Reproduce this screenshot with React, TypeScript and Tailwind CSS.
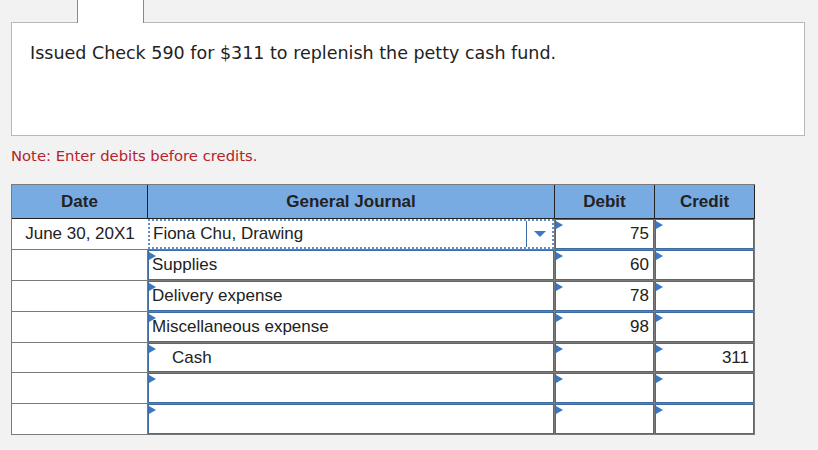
import React from 'react';

type Row = { date?: string; account: string; indent?: boolean; debit?: string; credit?: string; h: string };

const rows: Row[] = [
  { date: 'June 30, 20X1', account: 'Fiona Chu, Drawing', debit: '75', h: 'h-[31px]' },
  { account: 'Supplies', debit: '60', h: 'h-[31px]' },
  { account: 'Delivery expense', debit: '78', h: 'h-[31px]' },
  { account: 'Miscellaneous expense', debit: '98', h: 'h-[31px]' },
  { account: 'Cash', indent: true, credit: '311', h: 'h-[30px]' },
  { account: '', h: 'h-[31px]' },
  { account: '', h: 'h-[31px]' },
];

function Marker() {
  return (
    <span className="absolute left-0 top-px w-0 h-0 border-t-[4px] border-b-[4px] border-l-[7px] border-t-transparent border-b-transparent border-l-[#3a78c3]" />
  );
}

function AmountCell({ value }: { value?: string }) {
  return (
    <div className="border-r border-b border-[#7a7a7a]">
      <div className="relative h-full border border-[#3f6ba3] bg-white flex items-center justify-end pr-[4px]">
        <Marker />
        {value}
      </div>
    </div>
  );
}

export default function App() {
  return (
    <div className="w-[818px] h-[450px] bg-[#f2f2f2] overflow-hidden text-[#222]" style={{ fontFamily: '"DejaVu Sans", Verdana, sans-serif' }}>
      <div className="relative z-10 ml-[77px] w-[67px] h-[23px] -mb-px bg-white border-x border-[#8a8a8a]" />
      <div className="ml-[11px] w-[794px] h-[114px] bg-white border border-[#b8b8b8] pl-[18px] pt-[17px] text-[17.5px]">
        Issued Check 590 for $311 to replenish the petty cash fund.
      </div>
      <div className="ml-[11px] mt-[9px] text-[14.8px] text-[#b4232b] leading-[22px]">
        Note: Enter debits before credits.
      </div>

      <div
        className="mt-[17px] ml-[11px] w-[744px] border-l border-t border-[#7a7a7a] text-[17px]"
        style={{ fontFamily: '"Liberation Sans", Arial, sans-serif' }}
      >
        <div className="grid grid-cols-[136px_407px_100px_100px] h-[34px] bg-[#78abe2] font-bold">
          <div className="flex items-center justify-center border-r border-b border-[#222]">Date</div>
          <div className="flex items-center justify-center border-r border-b border-[#222]">General Journal</div>
          <div className="flex items-center justify-center border-r border-b border-[#222]">Debit</div>
          <div className="flex items-center justify-center border-r border-b border-[#222]">Credit</div>
        </div>

        {rows.map((r, i) => (
          <div key={i} className={`grid grid-cols-[136px_407px_100px_100px] ${r.h}`}>
            <div className={`flex items-center justify-center bg-white border-b border-[#7a7a7a] ${i === 0 ? '' : 'border-r'}`}>
              {r.date}
            </div>
            {i === 0 ? (
              <div className="border-r border-b border-[#7a7a7a] bg-white">
                <div className="h-full flex items-center border-2 border-dotted border-[#5b8fd1] pl-[3px]">
                  <span className="flex-1">{r.account}</span>
                  <span className="w-px h-[26px] bg-[#3d6fae]" />
                  <span className="w-[25px] flex justify-center">
                    <span className="w-0 h-0 border-l-[6px] border-r-[6px] border-t-[6px] border-l-transparent border-r-transparent border-t-[#3a78c3]" />
                  </span>
                </div>
              </div>
            ) : (
              <div className="border-r border-b border-[#7a7a7a]">
                <div className={`relative h-full border border-[#3f6ba3] bg-white flex items-center ${r.indent ? 'pl-[23px]' : 'pl-[3px]'}`}>
                  <Marker />
                  {r.account}
                </div>
              </div>
            )}
            <AmountCell value={r.debit} />
            <AmountCell value={r.credit} />
          </div>
        ))}
      </div>
    </div>
  );
}
